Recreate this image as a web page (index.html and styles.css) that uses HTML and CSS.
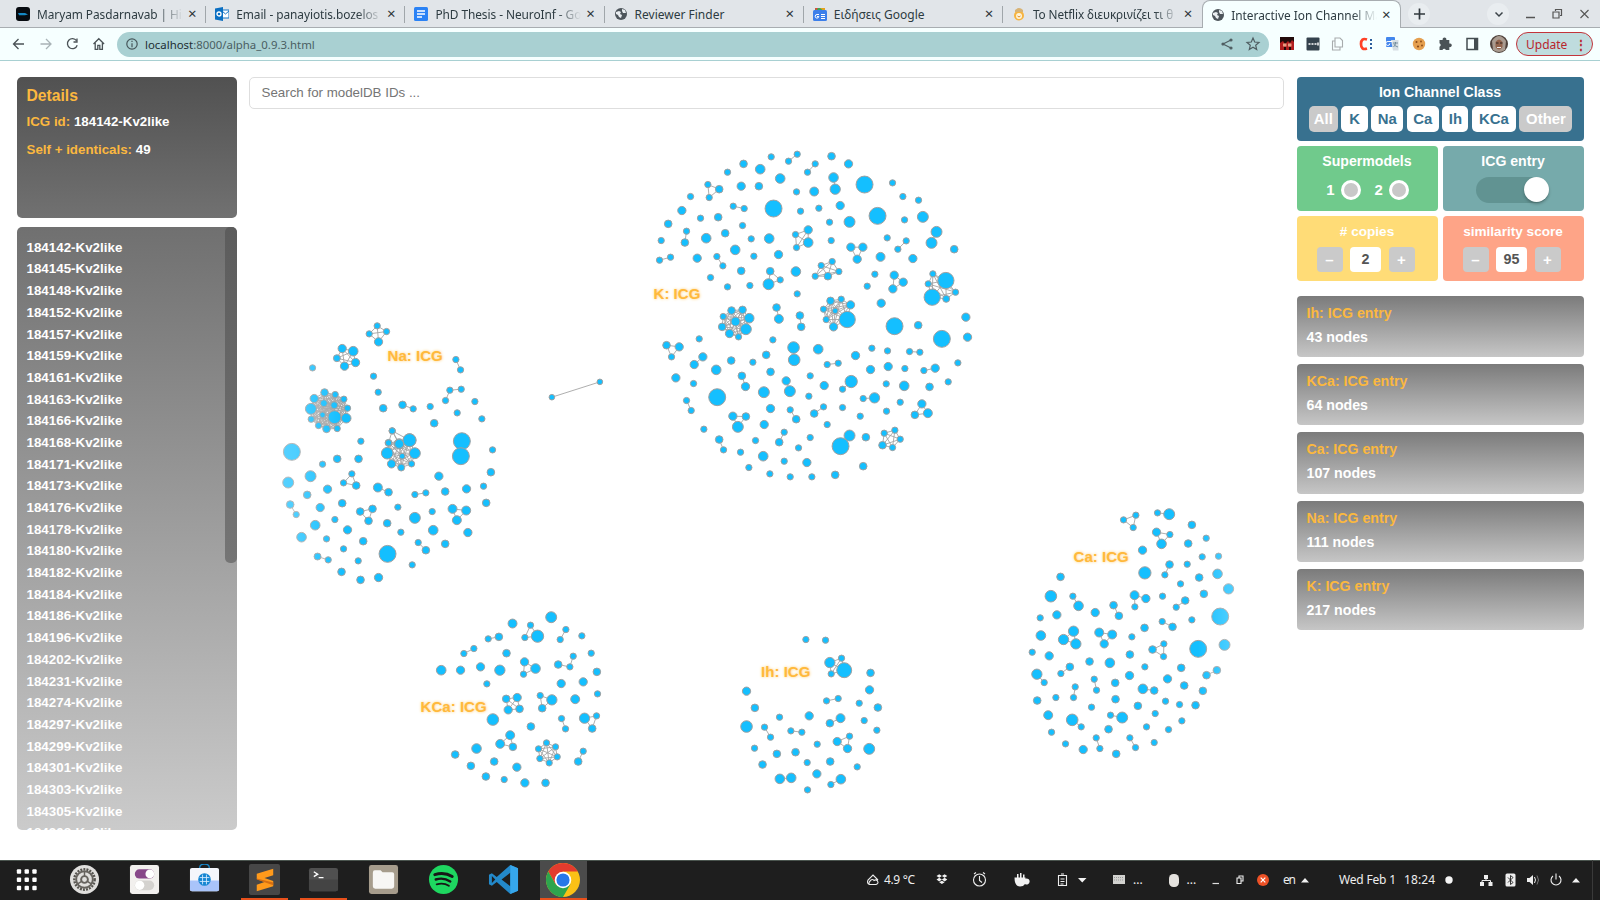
FILE: index.html
```html
<!DOCTYPE html>
<html lang="en">
<head>
<meta charset="utf-8">
<title>Interactive Ion Channel Map</title>
<link rel="stylesheet" href="styles.css">
</head>
<body>
<svg class="defs" width="0" height="0">
  <symbol id="globe" viewBox="0 0 14 14"><circle cx="7" cy="7" r="6" fill="#4d555b"/><path d="M2 5l3-1 2 1-1 2 2 1-1 3-2-1-1-2-2-1zM8 2l3 1 1 3-3 0-1-2z" fill="#e9edf0"/></symbol>
</svg>
<header class="tabs">
  <div class="tab"><svg class="fav" viewBox="0 0 14 14"><rect width="14" height="14" rx="3" fill="#070b10"/><path d="M2 6h7l3 1.500-3 .8H3z" fill="#1588c4"/></svg><span class="tt fade t1">Maryam Pasdarnavab | Hip</span><i>×</i></div>
  <div class="tab"><svg class="fav" viewBox="0 0 14 14"><path d="M7 3h7v8H7z" fill="#fff" stroke="#1976c5"/><path d="M7 4l3.500 3L14 4" fill="none" stroke="#1976c5"/><path d="M0 1.500L8 0v14l-8-1.500z" fill="#0a6fc2"/><circle cx="4" cy="7" r="2" fill="none" stroke="#fff" stroke-width="1.300"/></svg><span class="tt fade t2">Email - panayiotis.bozelos</span><i>×</i></div>
  <div class="tab"><svg class="fav" viewBox="0 0 14 14"><rect width="14" height="14" rx="1.500" fill="#2a82f5"/><path d="M3 4h8M3 7h8M3 10h5" stroke="#fff" stroke-width="1.300"/></svg><span class="tt fade t3">PhD Thesis - NeuroInf - Go</span><i>×</i></div>
  <div class="tab"><svg class="fav"><use href="#globe"/></svg><span class="tt t4">Reviewer Finder</span><i>×</i></div>
  <div class="tab"><svg class="fav" viewBox="0 0 14 14"><path d="M2 1h10v4H2z" fill="#3ba757"/><path d="M7 1h5v4z" fill="#e5a11b"/><path d="M2 1h3l-2 3z" fill="#e4473b"/><rect y="3" width="14" height="11" rx="1.500" fill="#3c7fea"/><path d="M6 7.500H4a1.800 1.800 0 1 0 1.800 2H4M8 7.500h4M8 9.500h4M8 11.500h4" fill="none" stroke="#fff"/></svg><span class="tt t5">Ειδήσεις Google</span><i>×</i></div>
  <div class="tab"><svg class="fav" viewBox="0 0 14 14"><circle cx="7" cy="8.500" r="5" fill="#f6b440"/><path d="M3 3q4-4 8 0v2H3z" fill="#d8b374"/><circle cx="7" cy="9" r="3" fill="#fff4d8"/><path d="M5.500 9q1.500 2 3 0" stroke="#e28b24" fill="none"/></svg><span class="tt fade t6">Το Netflix διευκρινίζει τι θ</span><i>×</i></div>
  <div class="tab active"><svg class="fav"><use href="#globe"/></svg><span class="tt fade t7">Interactive Ion Channel Ma</span><i>×</i></div>
  <svg class="wm" viewBox="0 0 194 28"><circle cx="18" cy="14" r="11" fill="#e9edf0"/><path d="M13 14h11M18.500 8.500v11" stroke="#30383d" stroke-width="1.700"/><circle cx="97" cy="14" r="11" fill="#e9edf0"/><path d="M94.500 12.500l3.500 3.500 3.500-3.500" fill="none" stroke="#3b4348" stroke-width="1.500"/><path d="M125 17.500h9" stroke="#555" stroke-width="1.500"/><path d="M152 12h6v6h-6zM154.500 11V9.500h6v6H159" fill="none" stroke="#555" stroke-width="1.200"/><path d="M179.500 10l8 8M187.500 10l-8 8" stroke="#555" stroke-width="1.100"/></svg>
</header>
<nav class="toolbar">
  <svg class="navicons" viewBox="0 0 116 32" fill="none" stroke="#4b5357" stroke-width="1.300"><path d="M23.500 16h-10M18 11l-5 5 5 5"/><path d="M40 16h10M45.500 11l5 5-5 5" stroke="#a9b3b7"/><path d="M76 12.700a5 5 0 1 0 .7 4.500M76.500 10.500v3.500H73"/><path d="M93 16l5.300-5.300 5.300 5.300M94.700 15v6.300h2.600v-4h2v4h2.600V15"/></svg>
  <div class="url"><svg viewBox="0 0 14 14" fill="none" stroke="#46565a" stroke-width="1.200"><circle cx="7" cy="7" r="5.200"/><path d="M7 6.300v4M7 3.800v1.300"/></svg><span><b>localhost</b>:8000/alpha_0.9.3.html</span><svg class="share" viewBox="0 0 42 16" fill="none" stroke="#4f5d61" stroke-width="1.200"><path d="M11 4L3 8l8 4"/><circle cx="11" cy="4" r="1" fill="#4f5d61"/><circle cx="3" cy="8" r="1" fill="#4f5d61"/><circle cx="11" cy="12" r="1" fill="#4f5d61"/><path d="M33 2l1.700 4 4.300.4-3.300 2.900 1 4.300L33 11.300l-3.700 2.300 1-4.300L27 6.400l4.300-.4z"/></svg></div>
  <svg class="ext" viewBox="0 0 246 28"><rect x="11" y="7" width="14" height="13" fill="#b01c1e"/><path d="M11 7h14v5l-2-2-2 3-2-2-3 3-2-3-3 2z" fill="#220a0a"/><path d="M14 13.500h3.500v3H14zM19 13.500h3.500v3H19z" fill="#e79c81"/><path d="M15 17h2v3h-2zM20 17h2v3h-2z" fill="#220a0a"/><rect x="37.500" y="7.500" width="13" height="13" rx="1" fill="#34424d"/><path d="M39.500 14h2m1 0h2m1 0h2m1.500-1.500v3" stroke="#fff" stroke-width="1.500"/><path d="M66 8h5l2.500 2.500V17H66zM66 11h-2.500v9H71v-3" fill="#f7ffff" stroke="#a8acad" stroke-width="1.100"/><path d="M98 9.500q-6-2-6 4.500t6 4.500" fill="none" stroke="#ff4126" stroke-width="2.700"/><path d="M102 9v2M102 13v2M102 17v2" stroke="#2b5c9c" stroke-width="2"/><rect x="117" y="7" width="9" height="10" rx="1" fill="#4386ed"/><path d="M122 10h7.500v10.500H124z" fill="#d6dee4"/><path d="M123.800 11.500h-4.200a2 2 0 1 0 1.700 2" transform="translate(-.5)" fill="none" stroke="#fff"/><path d="M124 13h5M126.500 12v1q0 2.500-2 4M124.500 14q2 2.500 4.500 3" fill="none" stroke="#627f91" stroke-width=".8"/><circle cx="150" cy="14" r="6.200" fill="#e5a050"/><g fill="#8a4a18"><circle cx="147.500" cy="12" r="1"/><circle cx="152" cy="11.500" r=".9"/><circle cx="149" cy="16.500" r="1.100"/><circle cx="153" cy="15.500" r=".9"/></g><path d="M170.500 10h3.200a1.900 1.900 0 1 1 3.600 0h3v3.500a1.900 1.900 0 1 1 0 3.600V20h-3.500a1.700 1.700 0 0 0-3.300 0h-3v-3.300a1.800 1.800 0 0 0 0-3.400z" fill="#4a5256"/><rect x="198" y="8.500" width="10.500" height="11" fill="none" stroke="#444d51" stroke-width="1.500"/><path d="M205 8h4v12h-4z" fill="#444d51"/><circle cx="230" cy="14" r="9" fill="#4e413b"/><path d="M223 11q7-10 14 0l-1 9q-6 4-12 0z" fill="#a99b90"/><path d="M226.500 12q3.500-5 7 0v5q-3.500 5-7 0z" fill="#93644d"/><path d="M227 13h2.500m1.500 0h2.500" stroke="#2e2421" stroke-width="1.200"/><path d="M228 17.500h4" stroke="#eee"/></svg>
  <div class="update"><span>Update</span><b>⋮</b></div>
</nav>
<main>
  <aside class="left">
    <section class="details"><h2>Details</h2><p><em>ICG id:</em> 184142-Kv2like</p><p class="self"><em>Self + identicals:</em> 49</p></section>
    <section class="list"><ul>
      <li>184142-Kv2like</li><li>184145-Kv2like</li><li>184148-Kv2like</li><li>184152-Kv2like</li><li>184157-Kv2like</li><li>184159-Kv2like</li><li>184161-Kv2like</li><li>184163-Kv2like</li><li>184166-Kv2like</li><li>184168-Kv2like</li><li>184171-Kv2like</li><li>184173-Kv2like</li><li>184176-Kv2like</li><li>184178-Kv2like</li><li>184180-Kv2like</li><li>184182-Kv2like</li><li>184184-Kv2like</li><li>184186-Kv2like</li><li>184196-Kv2like</li><li>184202-Kv2like</li><li>184231-Kv2like</li><li>184274-Kv2like</li><li>184297-Kv2like</li><li>184299-Kv2like</li><li>184301-Kv2like</li><li>184303-Kv2like</li><li>184305-Kv2like</li><li>184308-Kv2like</li>
    </ul><div class="thumb"></div></section>
  </aside>
  <section class="center">
    <div class="search">Search for modelDB IDs ...</div>
    <svg id="graph" viewBox="249 109 1035 751"></svg>
  </section>
  <aside class="right">
    <section class="box classes"><h3>Ion Channel Class</h3><div class="btns"><span class="off all">All</span><span class="k">K</span><span class="na">Na</span><span class="ca">Ca</span><span class="ih">Ih</span><span class="kca">KCa</span><span class="off other">Other</span></div></section>
    <div class="quad">
      <section class="box green"><h3>Supermodels</h3><div class="row"><span>1</span><i class="radio"></i><span class="two">2</span><i class="radio"></i></div></section>
      <section class="box teal"><h3>ICG entry</h3><div class="switch"><i></i></div></section>
      <section class="box yellow"><h3># copies</h3><div class="step"><b>–</b><span>2</span><b>+</b></div></section>
      <section class="box coral"><h3>similarity score</h3><div class="step"><b>–</b><span>95</span><b>+</b></div></section>
    </div>
    <div class="cards">
      <section><h4>Ih: ICG entry</h4><p>43 nodes</p></section>
      <section><h4>KCa: ICG entry</h4><p>64 nodes</p></section>
      <section><h4>Ca: ICG entry</h4><p>107 nodes</p></section>
      <section><h4>Na: ICG entry</h4><p>111 nodes</p></section>
      <section><h4>K: ICG entry</h4><p>217 nodes</p></section>
    </div>
  </aside>
</main>
<footer class="taskbar">
  <div class="apps">
    <span><svg viewBox="0 0 32 32" fill="#fff"><g id="dots"><rect x="6" y="5.500" width="4.500" height="4.500" rx="1"/><rect x="14" y="5.500" width="4.500" height="4.500" rx="1"/><rect x="22" y="5.500" width="4.500" height="4.500" rx="1"/></g><use href="#dots" y="8.500"/><use href="#dots" y="17"/></svg></span>
    <span><svg viewBox="0 0 32 32"><circle cx="16" cy="16" r="15" fill="#e0dfdd"/><circle cx="16" cy="16" r="10.500" fill="none" stroke="#56544f" stroke-width="2.500" stroke-dasharray="2 1.200"/><circle cx="16" cy="16" r="8.600" fill="none" stroke="#66635e" stroke-width="2"/><circle cx="16" cy="16" r="3.500" fill="none" stroke="#66635e" stroke-width="2"/><path d="M16 12.500V8M19 18l4 2.500M13 18l-4 2.500" stroke="#66635e" stroke-width="1.500"/></svg></span>
    <span><svg viewBox="0 0 32 32"><rect x="1" y="1" width="30" height="30" rx="2.500" fill="#f2f0ee"/><rect x="6" y="5.500" width="20" height="9.500" rx="4.700" fill="#88488a"/><circle cx="21.500" cy="10.200" r="4.500" fill="#fff"/><rect x="6" y="17" width="20" height="10" rx="5" fill="#d4d2cf"/><circle cx="11" cy="22" r="4.800" fill="#fff"/></svg></span>
    <span><svg viewBox="0 0 32 32"><path d="M11 6V4q0-4 5-4t5 4v2" fill="none" stroke="#1686c8" stroke-width="1.400"/><rect x="1" y="4" width="30" height="24" rx="2" fill="#f4f6fb"/><path d="M1 17h30v9q0 2-2 2H3q-2 0-2-2z" fill="#a9c4fa"/><circle cx="16" cy="16" r="6.500" fill="#1686d2"/><path d="M11 14h10M11 18h10M14 11v10M18 11v10" stroke="#d6eaff" stroke-width=".9"/></svg></span>
    <span class="run"><svg viewBox="0 0 32 32"><rect width="32" height="32" rx="2" fill="#474747"/><path d="M25 5v6.500l-9 3 9 3v5.500L8 28v-6.500l8-3-8-3V10z" fill="#ff9a1b"/><path d="M8 15l17 4v3L8 16z" fill="#d66e12"/></svg></span>
    <span class="run"><svg viewBox="0 0 32 32"><rect x="1" y="4" width="30" height="24" rx="2.500" fill="#505050"/><path d="M1 16h30v10q0 2-2 2H3q-2 0-2-2z" fill="#444"/><path d="M6 8l4 2.500L6 13M11 14h5" fill="none" stroke="#fff" stroke-width="1.400"/></svg></span>
    <span><svg viewBox="0 0 32 32"><rect x="1" y="1" width="30" height="30" rx="2.500" fill="#a69c8c"/><path d="M5 9q0-2.500 2-2.500h6l2 2h10q2 0 2 2V23q0 2.500-2.500 2.500h-17Q5 25.500 5 23z" fill="#f7f6f4"/></svg></span>
    <span><svg viewBox="0 0 32 32"><circle cx="16" cy="16" r="15" fill="#1ed760"/><g fill="none" stroke="#171717" stroke-linecap="round"><path d="M7 11q10-3 18 2" stroke-width="3"/><path d="M8 16q8-2.500 15 2" stroke-width="2.500"/><path d="M9 21q7-2 12.500 1.500" stroke-width="2"/></g></svg></span>
    <span><svg viewBox="0 0 32 32"><path d="M23 1l8 3.500v23L23 31 9 18.500 4 22.500 1 21V11l3-1.500 5 4z" fill="#2389ca"/><path d="M23 9v14l-9-7zM4 12.500v7L7.500 16z" fill="#1e1e1e"/><path d="M23 1l8 3.500v23L23 31z" fill="#36a7ed"/></svg></span>
    <span class="run current"><svg class="chrome" viewBox="0 0 32 32"><circle cx="16" cy="16" r="16" fill="#fbc116"/><path d="M2.150 8A16 16 0 0 1 29.860 8H16L9 20z" fill="#e33b2e"/><path d="M2.150 8A16 16 0 0 0 16 32l7-12-7 3-7-3z" fill="#2da44e"/><circle cx="16" cy="16" r="7.800" fill="#fff"/><circle cx="16" cy="16" r="6.200" fill="#2878e8"/></svg></span>
  </div>
  <svg class="tray" viewBox="840 860 760 40">
    <g fill="none" stroke="#eee" stroke-width="1.100"><path d="M869.500 884.500q-3-1-1.500-4.500l5-5 5 5M869 884.500h7q3-1 1.500-3.500-1.500-2-3.500-.5-1.500-2-3.500 0-2 1.500-1.500 4"/><circle cx="979.500" cy="880" r="6"/><path d="M979.500 876v4.500l2.500 2M974 874l2-1.500M985 874l-2-1.500"/><path d="M1058.500 875.500h8v10h-8zM1061 874h3M1060.500 879h4M1060.500 881.500h4M1060.500 884h3"/><path d="M1237 878h4v5.500h-4zM1239 878v-2h4v5h-2"/><path d="M1553 876a5 5 0 1 0 6 0M1556 873.500v6"/></g>
    <path d="M936.500 876l2.700-1.800 2.700 1.800-2.700 1.800zM941.900 876l2.700-1.800 2.700 1.800-2.700 1.800zM936.500 879.600l2.700-1.800 2.700 1.800-2.700 1.800zM941.900 879.600l2.700-1.800 2.700 1.800-2.700 1.800zM939.200 882.300l2.700-1.500 2.700 1.500-2.700 1.800z" fill="#f2f2f2"/>
    <path d="M1014.500 877.500h11v1.200a3 3 0 1 1-.5 5.300q-1.500 2.500-5 2.500-5.500 0-5.500-9zM1017 874h1.500v3.500H1017zM1020 873h1.500v4.500H1020zM1023 874.500h1.500v3H1023z" fill="#f2f2f2"/>
    <path d="M1078 878h8.500l-4.250 4.500zM1301 882.500h8l-4-4.500zM1572 882.500h8l-4-4.500z" fill="#f2f2f2"/>
    <rect x="1113" y="875" width="12" height="9" fill="#d2d2cf"/><path d="M1114 877.500h10M1114 880h10" stroke="#999" stroke-dasharray="1 1"/>
    <rect x="1169" y="874" width="10" height="13" rx="4.500" fill="#e4e2de"/><path d="M1212.500 883.500h6.500" stroke="#ddd" stroke-width="1.200"/>
    <circle cx="1263" cy="880" r="6" fill="#ed5126"/><path d="M1260.700 877.700l4.600 4.600M1265.300 877.700l-4.600 4.600" stroke="#fff" stroke-width="1.200"/>
    <circle cx="1449" cy="880" r="3.700" fill="#f5f5f5"/>
    <path d="M1484 875h4v4h-4zM1480 882h4v4h-4zM1488.500 882h4v4h-4z" fill="#eee"/><path d="M1486 879v1.500h-4v2M1486 880.500h4.500v2" stroke="#eee" fill="none"/>
    <rect x="1505.500" y="873.500" width="10" height="13" rx="1.500" fill="#eee"/><path d="M1508 877.500l5 5-2.500 2v-9l2.500 2-5 5" fill="none" stroke="#222" stroke-width=".9"/>
    <path d="M1527 878h2.500l3.500-3v10l-3.500-3H1527z" fill="#eee"/><path d="M1534.500 877q2 3 0 6" fill="none" stroke="#eee"/><path d="M1537 875.500q3 4.500 0 9" fill="none" stroke="#777"/>
    <text x="884" y="884" textLength="31">4.9 °C</text><text x="1133" y="884">...</text><text x="1186.500" y="884">...</text><text x="1283" y="884" textLength="13">en</text><text x="1339" y="884" textLength="57">Wed Feb 1</text><text x="1404" y="884" textLength="31">18:24</text>
    <path d="M1592.500 860v40" stroke="#3a3a3a"/>
  </svg>
</footer>
<script src="graph.js"></script>
</body>
</html>
```
FILE: styles.css
```css
* { box-sizing: border-box; }
body { margin: 0; width: 1600px; height: 900px; overflow: hidden; background: #fff; font-family: "Liberation Sans", Arial, sans-serif; display: flex; flex-direction: column; }
h2, h3, h4, p, ul { margin: 0; padding: 0; }
i { font-style: normal; }
.defs { display: none; }

.tabs { height: 28px; flex: none; background: #e1e5e9; border-bottom: 1px solid #a8adb1; display: flex; padding-left: 7px; font-family: "Noto Sans", sans-serif; font-size: 12px; color: #2d3b41; }
.tab { width: 199.200px; height: 28px; padding: 0 0 0 9px; display: flex; align-items: center; flex: none; }
.tab::after { content: ""; width: 1px; height: 17px; background: #a0a6aa; margin-left: 7px; }
.tab:nth-child(6)::after, .tab.active::after { visibility: hidden; }
.tab.active { background: #f6ffff; border: 1px solid #a8adb1; border-bottom: 0; border-radius: 8px 8px 0 0; padding-left: 8px; }
.fav { width: 14px; height: 14px; flex: none; }
.tt { width: 146px; margin-left: 7px; overflow: hidden; white-space: nowrap; flex: none; }
.t1, .t2, .t3 { font-size: 11.900px; letter-spacing: -.07px; }
.t6 { font-size: 11.800px; letter-spacing: -.1px; }
.t7 { margin-left: 6px; font-size: 11.900px; }
.fade { -webkit-mask-image: linear-gradient(90deg, #000 83%, transparent); mask-image: linear-gradient(90deg, #000 83%, transparent); }
.tab i { width: 12px; margin-left: auto; font-size: 15px; line-height: 24px; height: 26px; text-align: center; color: #2c3438; }
.wm { width: 194px; height: 28px; flex: none; }

.toolbar { height: 33px; flex: none; background: #f6ffff; border-bottom: 1px solid #a8d0d2; display: flex; align-items: center; font-family: "Noto Sans", sans-serif; }
.navicons { width: 117px; height: 32px; flex: none; }
.url { width: 1152px; height: 25px; border-radius: 13px; background: #a9d0d2; display: flex; align-items: center; padding: 0 7px 0 8px; font-size: 11.400px; color: #4a5e62; flex: none; }
.url svg { width: 14px; height: 14px; }
.url span { margin-left: 6px; }
.url b { font-weight: 400; color: #1d2e32; }
.url .share { width: 42px; height: 16px; margin-left: auto; }
.ext { width: 246px; height: 28px; flex: none; }
.update { width: 77px; height: 24px; border: 1px solid #c3343b; border-radius: 12px; background: #bfdcde; color: #b8252d; font-size: 12px; display: flex; align-items: center; justify-content: space-between; padding: 0 5px 0 9px; margin-left: 1px; }

main { height: 799px; flex: none; padding: 16px 16px 0 16.500px; display: flex; }
.left { width: 220px; }
.details { height: 141px; border-radius: 5px; background: linear-gradient(#515151, #717171); padding: 9px 10px; color: #fff; font-weight: 700; font-size: 13.330px; }
.details h2 { font-size: 15.700px; line-height: 20px; color: #fbb83f; }
.details p { line-height: 16px; margin-top: 8px; }
.details .self { margin-top: 12.300px; }
.details em { font-style: normal; color: #fbb83f; }
.list { height: 603px; margin-top: 8.500px; border-radius: 5px; overflow: hidden; background: linear-gradient(#707070, #cbcbcb); display: flex; justify-content: space-between; }
.list ul { padding: 10.300px 0 0 10px; list-style: none; color: #fff; font: 700 13.360px/21.680px "Liberation Sans", Arial, sans-serif; }
.thumb { width: 12px; height: 336px; border-radius: 5px; background: linear-gradient(#5c5c5c, #757575); }
.center { width: 1035px; margin-left: 12.500px; display: flex; flex-direction: column; }
.search { height: 32px; border: 1px solid #dedede; border-radius: 5px; padding: 0 11.500px; font-size: 13.330px; line-height: 30px; color: #757575; flex: none; }
#graph { width: 1035px; height: 751px; flex: none; }
#graph circle { fill: #14bfff; stroke: #a0a0a0; stroke-width: 1; }
#graph line { stroke: #a5a5a5; stroke-width: .9; }
#graph text { font: 700 15.100px "Liberation Sans", Arial, sans-serif; fill: #ffb93c; text-shadow: 0 0 3px #ffca6b; }

.right { width: 287px; margin-left: 12.500px; }
.box { border-radius: 4px; color: #fff; text-align: center; }
.box h3 { font-size: 14.100px; line-height: 17px; }
.coral h3 { font-size: 13.600px; }
.yellow h3 { font-size: 13.600px; }
.classes { height: 63.500px; background: #38718f; padding-top: 7px; }
.btns { display: flex; margin: 5px 11px 0 12px; justify-content: space-between; font: 700 14.900px/26px "Liberation Sans", Arial, sans-serif; }
.btns span { background: #fff; color: #38718f; border-radius: 5px; height: 26px; flex: none; }
.btns .off { background: #cacaca; color: #fff; }
.all { width: 29.500px; } .k { width: 26.500px; } .na { width: 32px; } .ca { width: 32.500px; } .ih { width: 26px; } .kca { width: 44.300px; } .other { width: 53px; }
.quad { display: grid; grid-template-columns: 1fr 1fr; gap: 5px; margin-top: 5px; }
.quad .box { height: 65px; padding-top: 7px; }
.green { background: #70ca8c; } .teal { background: #76aaab; } .yellow { background: #ffdc77; } .coral { background: #fea487; }
.row { display: flex; justify-content: center; align-items: center; margin-top: 10px; font: 700 14.900px/20px "Liberation Sans", Arial, sans-serif; padding-left: 1px; }
.radio { width: 20px; height: 20px; border-radius: 50%; border: 3px solid #fff; background: #c8c8c8; margin-left: 6px; }
.two { margin-left: 14px; }
.switch { width: 73px; height: 26px; border-radius: 13px; background: #619392; margin: 7px auto 0 33px; display: flex; justify-content: flex-end; }
.switch i { width: 25px; height: 25px; border-radius: 50%; background: #fff; box-shadow: 0 2px 3px rgba(0,0,0,.25); }
.step { display: flex; justify-content: center; gap: 7.500px; margin-top: 7px; padding-right: 3px; font: 700 15px/25px "Liberation Sans", Arial, sans-serif; }
.step b { width: 26px; height: 25px; border-radius: 4px; background: #cacaca; }
.step span { width: 31px; height: 25px; border-radius: 4px; background: #fff; color: #555; font-size: 14.300px; }
.cards { display: grid; gap: 7px; margin-top: 15px; }
.cards section { height: 61.350px; border-radius: 4px; background: linear-gradient(#7b7b7b, #c6c6c6); padding: 9px 10px; color: #fff; font-weight: 700; font-size: 14.200px; }
.cards h4 { font-size: 14.200px; line-height: 17px; color: #fbb83f; }
.cards p { line-height: 17px; margin-top: 7px; }

.taskbar { height: 40px; background: #1e1e1e; border-top: 1px solid #4a544e; display: flex; justify-content: space-between; }
.apps { display: flex; gap: 12.800px; padding-left: 1.500px; }
.apps span { width: 47px; height: 39px; display: flex; align-items: center; justify-content: center; border-bottom: 2px solid transparent; flex: none; }
.apps span:first-child { padding-left: 2px; }
.apps svg { width: 31px; height: 31px; }
.apps .chrome { width: 34px; height: 34px; }
.apps .run { border-bottom-color: #e8501b; }
.apps .current { background: #4b4b4b; }
.tray { width: 760px; height: 40px; margin-top: -1px; }
.tray text { font: 12px "Noto Sans", sans-serif; fill: #eee; }
```
FILE: graph.js
```js
// Each cluster keeps its own origin; coordinates are in thirds of a pixel: x y r.
// "groups" are fully linked sets, "chains" link neighbours in order.
const clusters = [
  { ox: 270, oy: 310,
    groups: [
      '321 47 10,297 71 10,349 64 10,325 95 13',
      '216 115 13,249 123 15,256 157 13,223 168 13,200 144 11',
      '163 247 12,195 253 10,221 267 10,232 294 10,228 324 15,201 355 10,169 356 12,145 346 10,123 327 10,122 296 17,132 265 13,161 279 11,192 285 11,157 314 9,193 321 20',
      '355 398 11,387 401 16,418 390 20,434 429 17,424 461 10,393 472 11,364 461 13,351 429 18,396 438 9',
      '245 491 10,220 518 10,258 526 12', '270 604 12,307 596 12,295 632 12', '547 596 14,588 601 14,560 630 14'],
    chains: ['355 398 10,366 362 10,387 401 14,366 362 10,418 390 20', '557 148 10,571 179 10', '526 271 10,539 240 10,573 237 10', '397 284 12,429 296 10', '575 393 26,572 438 26', '323 532 14,355 546 12', '434 553 10,467 548 10', '60 583 12,78 613 10', '142 739 11,174 749 10', '444 697 10,467 720 12', '845 261 9,989 215 9'],
    singles: '127 173 10,310 198 10,324 246 10,339 294 12,480 289 10,614 274 10,561 308 10,635 326 10,492 339 12,272 393 10,667 419 10,65 425 26,201 446 12,265 446 12,157 462 10,121 498 17,54 517 17,172 537 13,111 554 12,216 579 12,150 592 13,506 498 13,662 486 12,640 528 10,589 536 13,525 544 12,648 578 12,383 591 10,486 604 10,434 623 17,351 639 12,392 666 10,489 660 15,194 628 10,135 645 15,232 659 13,94 681 15,169 686 10,279 693 12,220 716 10,352 731 26,525 701 12,593 667 13,264 752 10,426 764 10,214 785 12,271 809 12,325 802 13' },
  { ox: 640, oy: 140,
    groups: [
      '203 133 10,237 147 12,207 172 10', '466 283 10,504 269 13,504 307 15,469 322 10', '632 321 13,668 321 13,651 357 13', '543 376 10,576 364 10,596 394 10,563 408 12,525 408 10',
      '390 393 12,420 419 10,385 432 17', '762 405 13,789 426 13,758 446 13', '878 401 10,917 421 25,946 456 10,918 476 11,876 471 25,864 431 10',
      '249 529 10,274 511 12,307 509 12,327 534 15,317 567 17,295 590 10,268 580 13,246 560 12,286 544 14',
      '550 507 10,571 482 12,603 477 10,631 494 13,621 538 25,580 560 13,558 538 10,585 512 9',
      '79 615 12,117 620 13,94 650 10', '278 828 13,317 829 12,293 860 17', '845 791 13,863 819 14,824 824 12', '732 879 10,764 870 10,780 897 10,757 922 10,727 915 12'],
    chains: ['445 63 10,471 42 10', '502 96 10,525 71 10', '580 112 15,585 147 16', '279 198 10,312 205 10', '139 273 10,134 307 12', '58 360 10,91 351 10', '230 349 10,248 377 10', '889 275 17,874 308 17', '798 302 10,773 327 10', '409 502 12,416 536 14', '479 526 12,483 560 12', '460 622 18,462 659 18', '188 650 13,162 673 13', '561 673 10,594 669 10', '808 634 10,839 636 10', '851 691 10,885 684 13', '305 707 12,316 739 13', '438 722 13,449 753 17', '633 724 19,607 747 10', '669 775 10,703 773 16', '139 781 10,153 811 10', '522 820 12,550 800 10', '450 809 10,468 837 12', '432 876 10,417 906 12', '237 898 12,250 929 10', '628 886 17,601 918 26'],
    singles: '393 50 10,310 71 12,262 96 10,360 87 15,420 115 15,574 48 12,625 71 13,673 133 26,303 138 13,356 138 12,151 169 10,469 155 10,522 154 14,757 128 10,788 169 10,835 180 10,400 205 26,600 196 13,481 213 10,536 204 10,712 227 26,628 245 17,568 246 10,793 239 10,848 230 17,125 211 13,181 234 10,234 231 12,84 251 12,307 256 10,255 279 12,63 301 10,198 294 15,333 296 10,387 295 15,573 301 10,741 293 10,942 327 12,285 329 15,171 354 13,341 348 10,415 343 13,721 350 14,818 355 13,303 392 12,211 412 10,467 394 15,704 402 10,681 438 10,262 440 10,329 436 10,471 461 10,723 489 13,977 531 13,763 558 26,834 555 12,905 596 26,982 591 13,177 596 10,398 599 10,378 644 12,534 627 15,646 646 13,695 624 10,742 632 10,273 661 12,338 666 10,953 668 10,228 689 15,391 695 12,691 688 13,744 679 13,794 685 10,107 713 13,510 707 10,160 730 10,552 736 13,738 731 10,792 737 15,924 725 10,868 740 12,371 756 17,506 768 10,231 771 26,780 786 10,391 805 13,607 802 10,739 813 10,660 828 10,561 853 10,372 853 13,191 867 10,346 901 10,510 892 10,677 891 12,475 923 10,301 936 10,369 948 15,432 963 10,500 967 13,326 982 10,669 978 12,389 1001 10,450 1010 10,515 1010 10,585 1004 12' },
  { ox: 410, oy: 600,
    groups: ['361 75 10,344 112 10,382 108 19', '343 185 13,376 205 15,340 222 10', '288 296 12,321 292 13,328 326 12,294 329 13', '390 286 10,425 299 16,396 324 12', '523 354 16,559 347 10,546 385 12', '300 405 14,308 440 12,270 431 14', '409 428 10,436 440 10,441 470 10,417 488 10,389 475 10,385 446 10'],
    chains: ['234 116 10,266 110 12', '161 160 10,191 145 10', '467 88 10,450 118 10', '444 193 12,479 200 10,489 168 10', '454 355 10,466 386 10', '519 453 10,504 484 12'],
    singles: '423 51 17,307 70 14,515 107 10,289 159 12,543 159 10,93 210 15,151 210 13,211 200 13,269 210 16,560 215 12,453 250 13,519 245 13,230 251 10,562 281 10,495 297 14,248 358 18,362 379 12,199 445 15,135 463 12,182 497 12,252 484 12,320 501 13,227 529 12,282 538 10,344 548 13,406 548 12' },
  { ox: 720, oy: 620,
    groups: ['329 127 16,364 114 10,372 150 23,333 161 10', '351 364 13,388 348 10,382 385 13'],
    chains: ['319 242 10,354 235 10', '329 309 12,361 294 14', '133 321 10,151 351 10', '212 332 10,245 336 10', '179 476 15,213 473 15', '332 493 10,362 477 15'],
    singles: '257 58 10,316 60 10,451 158 12,448 209 13,79 213 13,104 263 12,417 249 10,473 262 12,178 291 10,267 287 13,432 301 10,470 330 10,79 319 18,291 372 10,103 384 10,170 401 12,226 396 12,447 386 17,127 433 12,261 427 10,330 424 12,411 440 10,290 461 13,262 509 10' },
  { ox: 1010, oy: 490,
    groups: ['340 89 10,377 75 10,369 112 10', '439 126 13,479 133 10,454 161 15', '190 423 16,160 448 16,197 461 16', '267 427 14,306 433 14,282 461 13', '427 478 12,461 461 10,460 499 10'],
    chains: ['442 68 10,477 72 17', '478 223 12,464 254 10', '188 318 10,205 347 15', '310 345 12,326 377 12', '407 325 13,373 315 14,374 350 10', '498 351 10,525 331 12', '456 394 10,487 410 12', '179 530 12,152 550 10', '80 552 16,102 577 10', '252 567 10,259 600 10', '195 590 10,190 622 10', '398 596 15,432 601 12', '589 555 12,620 540 12', '186 689 18,213 710 10', '301 675 10,336 682 17', '258 743 10,269 775 10', '359 743 10,376 772 10'],
    singles: '545 104 12,588 144 10,534 160 12,397 180 13,576 200 10,625 198 10,531 222 10,404 248 19,151 260 12,567 262 12,622 251 15,511 281 10,655 296 16,122 318 18,457 318 10,581 311 12,255 367 13,140 374 13,90 383 10,545 389 10,630 379 26,92 436 15,403 413 12,365 440 10,564 476 26,643 464 17,66 486 10,117 497 13,359 493 12,238 514 12,299 518 15,404 530 10,513 533 12,358 556 13,472 566 13,315 578 12,522 586 12,578 602 12,81 631 12,137 622 10,316 627 12,466 633 10,508 643 10,556 645 12,383 647 12,244 651 10,435 670 10,114 675 14,515 692 10,295 717 12,409 710 10,475 718 10,124 726 10,432 757 10,166 761 10,219 778 13,318 791 12' }
];
const parse = s => s.split(',').map(p => p.split(' ').map(n => n / 3));
let out = '';
for (const c of clusters) {
  let dots = '', lines = '';
  const link = (a, b) => { lines += `<line x1="${a[0]}" y1="${a[1]}" x2="${b[0]}" y2="${b[1]}"/>`; };
  const dot = p => { dots += `<circle cx="${p[0]}" cy="${p[1]}" r="${p[2] - 0.2}"/>`; };
  c.groups.map(parse).forEach(g => { g.forEach((p, i) => { for (let j = i + 1; j < g.length; j++) link(p, g[j]); }); g.forEach(dot); });
  c.chains.map(parse).forEach(g => { g.slice(1).forEach((p, i) => link(g[i], p)); g.forEach(dot); });
  parse(c.singles).forEach(dot);
  out += `<g transform="translate(${c.ox + 0.2} ${c.oy + 0.2})">${lines}${dots}</g>`;
}
out += `<defs><linearGradient id="fl"><stop offset="0" stop-color="#fff" stop-opacity=".35"/><stop offset=".5" stop-color="#fff" stop-opacity=".25"/><stop offset="1" stop-color="#fff" stop-opacity="0"/></linearGradient><linearGradient id="fr"><stop offset="0" stop-color="#fff" stop-opacity="0"/><stop offset=".35" stop-color="#fff" stop-opacity=".22"/><stop offset="1" stop-color="#fff" stop-opacity=".35"/></linearGradient></defs><rect x="249" y="300" width="93" height="300" fill="url(#fl)"/><rect x="1198" y="490" width="84" height="280" fill="url(#fr)"/>`;
for (const [t, x, y] of [['K: ICG', 653.5, 299], ['Na: ICG', 387.500, 361], ['KCa: ICG', 420.500, 712], ['Ih: ICG', 761, 676.5], ['Ca: ICG', 1073.500, 562]]) out += `<text x="${x}" y="${y}">${t}</text>`;
document.getElementById('graph').innerHTML = out;
```
